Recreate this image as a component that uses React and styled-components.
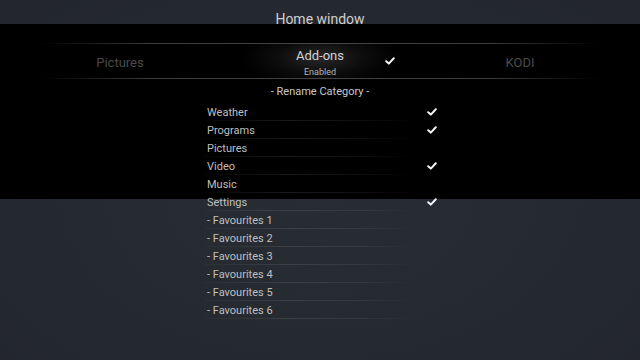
import React from "react";
import styled, { createGlobalStyle } from "styled-components";

const GlobalStyle = createGlobalStyle`
  html, body {
    margin: 0;
    padding: 0;
    background: #262b32;
  }
  body {
    font-family: Roboto, "Liberation Sans", sans-serif;
  }
`;

const Check = () => (
  <svg width="10" height="8" viewBox="0 0 10 8">
    <path
      d="M1.2 4.2 L3.8 6.6 L8.8 1.2"
      fill="none"
      stroke="#f4f4f4"
      strokeWidth="2"
      strokeLinecap="round"
      strokeLinejoin="round"
    />
  </svg>
);

const categories = [
  { name: "Weather", on: true },
  { name: "Programs", on: true },
  { name: "Pictures", on: false },
  { name: "Video", on: true },
  { name: "Music", on: false },
  { name: "Settings", on: true },
  { name: "- Favourites 1", on: false },
  { name: "- Favourites 2", on: false },
  { name: "- Favourites 3", on: false },
  { name: "- Favourites 4", on: false },
  { name: "- Favourites 5", on: false },
  { name: "- Favourites 6", on: false },
];

const CategoryRow = ({ name, on }) => (
  <Row>
    <RowLabel>{name}</RowLabel>
    {on && <Check />}
  </Row>
);

const App = () => {
  return (
    <Page>
      <GlobalStyle />
      <Title>Home window</Title>
      <Separator />
      <Carousel>
        <SideItem>Pictures</SideItem>
        <FocusItem>
          <FocusLabel>Add-ons</FocusLabel>
          <FocusSub>Enabled</FocusSub>
          <FocusCheck>
            <Check />
          </FocusCheck>
        </FocusItem>
        <SideItem>KODI</SideItem>
      </Carousel>
      <Separator />
      <SectionHeading>- Rename Category -</SectionHeading>
      <List>
        {categories.map((c) => (
          <CategoryRow key={c.name} name={c.name} on={c.on} />
        ))}
      </List>
    </Page>
  );
};

const Page = styled.div`
  width: 640px;
  height: 360px;
  overflow: hidden;
  display: flex;
  flex-direction: column;
  align-items: center;
  background:
    linear-gradient(
      to bottom,
      transparent 0 24px,
      #000 24px 199px,
      transparent 199px
    ),
    radial-gradient(ellipse 420px 260px at 50% 55%, #282d34, #23272d);
`;

const Title = styled.div`
  padding-top: 9px;
  height: 20px;
  line-height: 20px;
  font-size: 14px;
  color: #cfcfcf;
`;

const Separator = styled.div`
  width: 560px;
  height: 1px;
  flex-shrink: 0;
  margin-top: 14px;
  background: linear-gradient(
    to right,
    rgba(70, 70, 70, 0) 0%,
    #3c3c3c 20%,
    #444 50%,
    #3c3c3c 80%,
    rgba(70, 70, 70, 0) 100%
  );
`;

const Carousel = styled.div`
  width: 600px;
  height: 34px;
  display: grid;
  grid-template-columns: 200px 200px 200px;
  align-items: center;

  & + ${Separator} {
    margin-top: 0;
  }
`;

const SideItem = styled.div`
  text-align: center;
  font-size: 13px;
  color: #4a4a4a;
  padding-top: 2px;
`;

const FocusItem = styled.div`
  position: relative;
  height: 34px;
  display: flex;
  flex-direction: column;
  align-items: center;
  background: radial-gradient(
    ellipse 80px 30px at 50% 40%,
    #282828 0%,
    rgba(20, 20, 20, 0.6) 55%,
    rgba(0, 0, 0, 0) 100%
  );
`;

const FocusLabel = styled.div`
  margin-top: 4px;
  font-size: 13px;
  line-height: 16px;
  color: #d2d2d2;
`;

const FocusSub = styled.div`
  margin-top: 3px;
  font-size: 9px;
  line-height: 11px;
  color: #b4b4b4;
`;

const FocusCheck = styled.div`
  position: absolute;
  right: 25px;
  top: 13px;
  display: flex;
`;

const SectionHeading = styled.div`
  margin-top: 5px;
  height: 16px;
  line-height: 16px;
  font-size: 11px;
  color: #c8c8c8;
`;

const List = styled.div`
  margin-top: 3px;
  width: 240px;
  display: flex;
  flex-direction: column;
`;

const Row = styled.div`
  height: 18px;
  padding: 0 3px 0 7px;
  display: flex;
  align-items: center;
  justify-content: space-between;
  position: relative;
  box-sizing: border-box;

  &::after {
    content: "";
    position: absolute;
    left: 4px;
    right: 24px;
    bottom: 0;
    height: 1px;
    background: linear-gradient(
      to right,
      rgba(255, 255, 255, 0.02),
      rgba(255, 255, 255, 0.1) 40%,
      rgba(255, 255, 255, 0.06) 75%,
      rgba(255, 255, 255, 0)
    );
  }
`;

const RowLabel = styled.span`
  font-size: 11px;
  line-height: 17px;
  color: #bfbfbf;
`;

export default App;
